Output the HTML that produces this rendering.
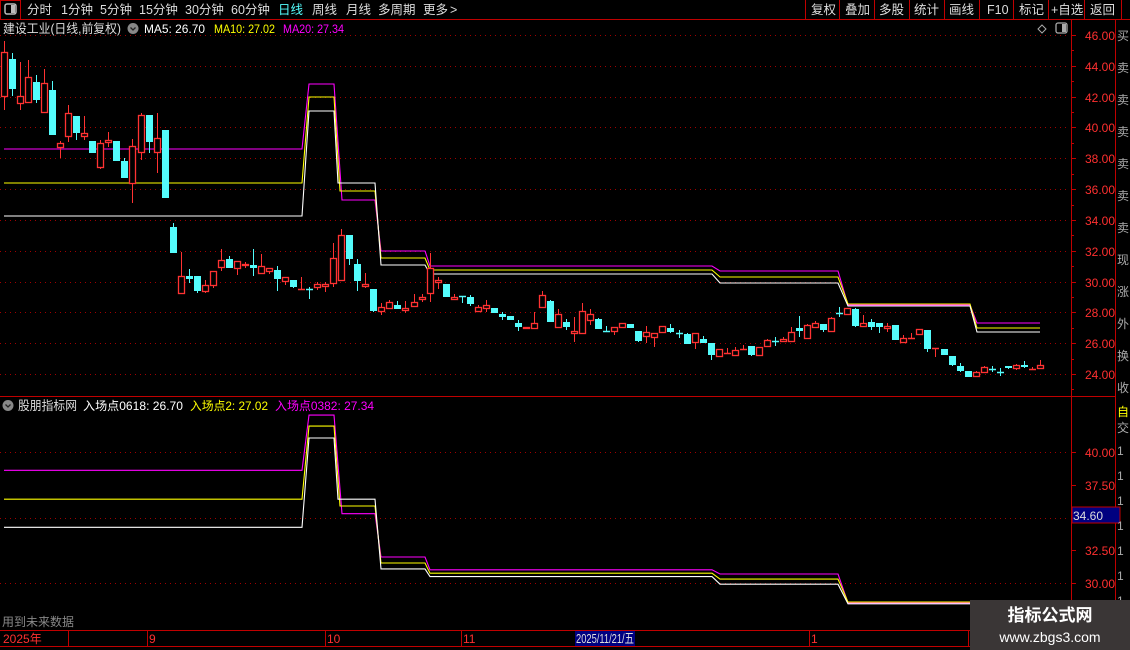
<!DOCTYPE html>
<html><head><meta charset="utf-8">
<style>
html,body{margin:0;padding:0;background:#000;width:1130px;height:650px;overflow:hidden;font-family:"Liberation Sans","Noto Sans CJK SC",sans-serif;}
svg{position:absolute;left:0;top:0}
text{font-family:"Liberation Sans","Noto Sans CJK SC",sans-serif;}
</style></head><body>
<svg id="s" width="1130" height="650" viewBox="0 0 1130 650" xmlns="http://www.w3.org/2000/svg">
<rect width="1130" height="650" fill="#000"/>
<line x1="0" y1="19.5" x2="1130" y2="19.5" stroke="#c00000"/>
<rect x="0.5" y="0.5" width="20" height="19" fill="none" stroke="#c00000"/>
<rect x="5" y="4" width="11" height="10" rx="2" fill="none" stroke="#bbb" stroke-width="1.5"/>
<rect x="11" y="5" width="4" height="8" fill="#bbb"/>
<g font-size="12.5" fill="#ddd">
<text x="27" y="14">分时</text><text x="61" y="14">1分钟</text><text x="100" y="14">5分钟</text>
<text x="139" y="14">15分钟</text><text x="185" y="14">30分钟</text><text x="231" y="14">60分钟</text>
<text x="278" y="14" fill="#54fcfc">日线</text><text x="312" y="14">周线</text><text x="346" y="14">月线</text>
<text x="378" y="14">多周期</text><text x="423" y="14">更多</text><text x="450" y="14">&gt;</text>
</g>
<g stroke="#c00000">
<line x1="805.5" y1="0" x2="805.5" y2="19"/><line x1="839.5" y1="0" x2="839.5" y2="19"/>
<line x1="874.5" y1="0" x2="874.5" y2="19"/><line x1="909.5" y1="0" x2="909.5" y2="19"/>
<line x1="944.5" y1="0" x2="944.5" y2="19"/><line x1="979.5" y1="0" x2="979.5" y2="19"/>
<line x1="1013.5" y1="0" x2="1013.5" y2="19"/><line x1="1048.5" y1="0" x2="1048.5" y2="19"/>
<line x1="1084.5" y1="0" x2="1084.5" y2="19"/><line x1="1121.5" y1="0" x2="1121.5" y2="19"/>
</g>
<g font-size="12.5" fill="#ddd">
<text x="811" y="14">复权</text><text x="845" y="14">叠加</text><text x="879" y="14">多股</text>
<text x="914" y="14">统计</text><text x="949" y="14">画线</text><text x="987" y="14">F10</text>
<text x="1019" y="14">标记</text><text x="1051" y="14">+自选</text><text x="1090" y="14">返回</text>
</g>
<text x="3" y="33" font-size="12.5" fill="#ddd" textLength="118" lengthAdjust="spacingAndGlyphs">建设工业(日线,前复权)</text>
<circle cx="133" cy="28.5" r="5.5" fill="#888"/><path d="M130.5 27.5 L133 30 L135.5 27.5" stroke="#222" fill="none" stroke-width="1.3"/>
<text x="144" y="33" font-size="12" fill="#fff" textLength="61" lengthAdjust="spacingAndGlyphs">MA5: 26.70</text>
<text x="214" y="33" font-size="12" fill="#ff0" textLength="61" lengthAdjust="spacingAndGlyphs">MA10: 27.02</text>
<text x="283" y="33" font-size="12" fill="#f0f" textLength="61" lengthAdjust="spacingAndGlyphs">MA20: 27.34</text>
<path d="M1042 25 L1046 29 L1042 33 L1038 29 Z" stroke="#aaa" fill="none"/>
<rect x="1056" y="23" width="11" height="10" rx="2" fill="none" stroke="#aaa" stroke-width="1.3"/><rect x="1062" y="24" width="4" height="8" fill="#aaa"/>
<line x1="1071.5" y1="20" x2="1071.5" y2="630" stroke="#c00000"/>
<line x1="1115.5" y1="20" x2="1115.5" y2="650" stroke="#c00000"/>
<line x1="0" y1="396.5" x2="1115" y2="396.5" stroke="#c00000"/>
<line x1="0" y1="630.5" x2="1130" y2="630.5" stroke="#c00000"/>
<line x1="0" y1="646.5" x2="970" y2="646.5" stroke="#c00000"/>
<g id="grid"></g>
<g id="lines"></g>
<g id="candles"></g>
<circle cx="8" cy="405.5" r="5.5" fill="#888"/><path d="M5.5 404.5 L8 407 L10.5 404.5" stroke="#222" fill="none" stroke-width="1.3"/>
<text x="18" y="410" font-size="12.5" fill="#ddd" textLength="59" lengthAdjust="spacingAndGlyphs">股朋指标网</text>
<text x="83" y="410" font-size="12" fill="#fff" textLength="100" lengthAdjust="spacingAndGlyphs">入场点0618: 26.70</text>
<text x="190" y="410" font-size="12" fill="#ff0" textLength="78" lengthAdjust="spacingAndGlyphs">入场点2: 27.02</text>
<text x="275" y="410" font-size="12" fill="#f0f" textLength="99" lengthAdjust="spacingAndGlyphs">入场点0382: 27.34</text>
<text x="2" y="626" font-size="12" fill="#888">用到未来数据</text>
<g id="axis" font-size="12" fill="#ff3030"></g>
<rect x="1072" y="507" width="48" height="16" fill="#000080" stroke="#c00000"/>
<text x="1073" y="520" font-size="12" fill="#ddd">34.60</text>
<g font-size="12" fill="#aaa">
<text x="1117" y="40">买</text><text x="1117" y="72">卖</text><text x="1117" y="104">卖</text><text x="1117" y="136">卖</text>
<text x="1117" y="168">卖</text><text x="1117" y="200">卖</text><text x="1117" y="232">卖</text><text x="1117" y="264">现</text>
<text x="1117" y="296">涨</text><text x="1117" y="328">外</text><text x="1117" y="360">换</text><text x="1117" y="392">收</text>
<text x="1117" y="416" fill="#ff0">自</text><text x="1117" y="432">交</text>
<text x="1117" y="455">1</text><text x="1117" y="480">1</text><text x="1117" y="505">1</text><text x="1117" y="530">1</text>
<text x="1117" y="555">1</text><text x="1117" y="580">1</text><text x="1117" y="605">1</text>
</g>
<g stroke="#c00000">
<line x1="68.5" y1="630" x2="68.5" y2="646"/><line x1="147.5" y1="630" x2="147.5" y2="646"/>
<line x1="325.5" y1="630" x2="325.5" y2="646"/><line x1="461.5" y1="630" x2="461.5" y2="646"/>
<line x1="809.5" y1="630" x2="809.5" y2="646"/><line x1="968.5" y1="630" x2="968.5" y2="646"/>
</g>
<rect x="575" y="631" width="60" height="15" fill="#000080"/>
<g font-size="12" fill="#ff3030">
<text x="3" y="643">2025年</text><text x="149" y="643">9</text><text x="327" y="643">10</text>
<text x="463" y="643">11</text><text x="811" y="643">1</text>
</g>
<text x="576" y="643" font-size="13" fill="#ddd" textLength="58" lengthAdjust="spacingAndGlyphs">2025/11/21/五</text>
<rect x="970" y="600" width="160" height="50" fill="#3a3636"/>
<text x="1050" y="621" font-size="17" font-weight="bold" fill="#fff" text-anchor="middle">指标公式网</text>
<text x="1050" y="642" font-size="14" fill="#fff" text-anchor="middle">www.zbgs3.com</text>
</svg>
<script>
var NS="http://www.w3.org/2000/svg";
function el(p,t,a){var e=document.createElementNS(NS,t);for(var k in a)e.setAttribute(k,a[k]);document.getElementById(p).appendChild(e);return e;}
function ty(p){return 35+(46-p)*15.41;}
function by(p){return 452+(40-p)*13.1;}
for(var p=46;p>=24;p-=2){var y=Math.round(ty(p))+0.5;el('grid','line',{x1:0,y1:y,x2:1070,y2:y,stroke:'#a00000','stroke-dasharray':'1 4'});
 el('grid','line',{x1:1071,y1:y,x2:1076,y2:y,stroke:'#c00000'});
 var t=el('axis','text',{x:1085,y:y+4.5});t.textContent=p.toFixed(2);
 var y2=Math.round(ty(p-1))+0.5;el('grid','line',{x1:1071,y1:y2,x2:1074,y2:y2,stroke:'#c00000'});}
[40,35,30].forEach(function(p){var y=Math.round(by(p))+0.5;el('grid','line',{x1:0,y1:y,x2:1070,y2:y,stroke:'#a00000','stroke-dasharray':'1 4'});});
[40,37.5,32.5,30].forEach(function(p){var y=Math.round(by(p))+0.5;el('grid','line',{x1:1071,y1:y,x2:1076,y2:y,stroke:'#c00000'});var t=el('axis','text',{x:1085,y:y+4.5});t.textContent=p.toFixed(2);});
var L={
'#f0f':[[4,149],[302,149],[309,84],[334,84],[342,200],[375,200],[381,251],[425,251],[430,266],[712,266],[720,271],[838,271],[848,305],[970,305],[977,323],[1040,323]],
'#ff0':[[4,183],[302,183],[309,97],[334,97],[340,191],[375,191],[381,258],[425,258],[430,270],[712,270],[720,277],[838,277],[848,304],[970,304],[977,328],[1040,328]],
'#fff':[[4,216],[302,216],[309,111],[334,111],[338,183],[375,183],[381,265],[425,265],[430,274],[712,274],[720,283],[838,283],[848,306],[970,306],[977,332],[1040,332]]};
for(var c in L){var pts=L[c];
 el('lines','polyline',{points:pts.map(function(q){return q[0]+','+q[1];}).join(' '),fill:'none',stroke:c,'stroke-width':1.1});
 var b=pts.filter(function(q){return q[0]<=975;}).map(function(q){var pr=46-(q[1]-35)/15.41;return q[0]+','+Math.min(by(pr),629).toFixed(1);});
 el('lines','polyline',{points:b.join(' '),fill:'none',stroke:c,'stroke-width':1.1});}
var C="r 52,97,41,110|c 59,89,53,96|r 96,104,62,110|r 77,103,60,103|c 82,100,75,103|r 83,113,69,113|c 90,135,81,135|r 143,148,141,158|r 113,137,105,142|c 116,133,116,140|r 133,137,116,140|c 141,153,141,153|r 143,168,140,169|r 140,143,132,147|c 141,161,141,161|c 161,178,158,178|r 146,184,139,203|r 115,153,113,160|c 115,142,115,153|r 138,153,113,173|c 130,198,130,198|c 227,253,223,253|r 276,294,252,294|c 276,279,269,283|c 276,291,276,293|r 285,292,280,293|r 271,286,271,288|r 260,268,249,271|c 259,268,256,268|r 261,269,261,275|r 264,266,262,268|c 265,268,249,276|r 266,274,254,274|r 268,272,268,274|c 270,279,266,291|r 277,282,277,285|c 280,287,280,288|r 289,289,277,289|c 289,289,287,299|r 284,288,282,290|r 284,287,282,292|r 258,284,243,287|r 235,281,229,281|c 235,259,235,265|c 264,281,259,291|r 284,287,273,288|c 289,311,289,312|r 307,312,303,315|r 302,309,300,309|c 305,309,301,309|r 308,311,301,313|r 302,307,294,307|r 297,300,294,302|r 268,294,253,302|r 280,283,277,289|c 284,297,284,297|r 297,300,294,300|c 296,297,296,303|c 297,304,295,306|r 307,312,305,312|r 305,309,300,312|c 308,313,308,313|c 314,317,312,320|c 316,320,316,320|c 323,327,320,331|r 327,329,327,329|r 323,329,312,329|r 295,308,291,308|c 301,322,300,322|r 314,328,309,328|c 322,327,319,330|r 331,334,317,342|r 311,334,303,334|r 314,321,309,325|c 319,329,318,329|c 331,331,326,331|r 327,332,327,335|r 323,328,323,328|c 324,328,324,328|c 331,341,331,342|r 332,337,326,343|r 333,338,333,347|r 326,333,326,333|c 328,332,324,333|c 333,333,330,338|c 334,344,333,344|r 333,343,333,349|c 339,343,336,343|c 343,355,343,360|r 349,357,349,357|r 353,353,348,353|r 350,356,347,356|r 349,349,345,349|c 346,355,346,356|r 347,356,347,356|r 340,347,339,347|c 341,341,337,346|r 339,342,337,342|r 332,342,327,342|c 328,331,316,337|r 325,339,324,339|r 323,328,321,328|c 324,330,324,332|r 318,332,317,332|c 313,313,307,317|r 308,315,308,315|c 309,326,308,327|r 323,327,315,327|c 322,327,319,330|c 323,327,323,333|r 326,329,323,332|c 325,340,325,340|r 338,343,335,343|r 338,338,333,338|r 329,335,329,335|c 330,349,330,352|r 348,348,348,357|c 349,355,349,355|c 356,365,356,366|c 366,371,363,372|c 371,377,371,377|r 372,377,371,377|r 367,373,366,373|c 369,369,366,372|c 372,372,368,376|c 366,368,366,369|r 365,369,364,370|c 365,367,361,368|r 369,369,367,370|r 365,369,360,369".split('|');
C.forEach(function(s,i){var col=s[0]=='r'?'#ff3232':'#54fcfc';var v=s.slice(2).split(',').map(Number);
 var x=Math.round(4+i*8.03)+0.5;
 el('candles','line',{x1:x,y1:v[2],x2:x,y2:v[3],stroke:col});
 if(v[1]-v[0]<1.5){el('candles','line',{x1:x-3.5,y1:v[0]+0.5,x2:x+3.5,y2:v[0]+0.5,stroke:col,'stroke-width':1.5});}
 else if(s[0]=='r'){el('candles','rect',{x:x-3,y:v[0]+0.5,width:6,height:v[1]-v[0]-1,fill:'#000',stroke:col,'stroke-width':1.3});}
 else{el('candles','rect',{x:x-3.5,y:v[0],width:7,height:v[1]-v[0],fill:col});}
});
</script>
</body></html>
